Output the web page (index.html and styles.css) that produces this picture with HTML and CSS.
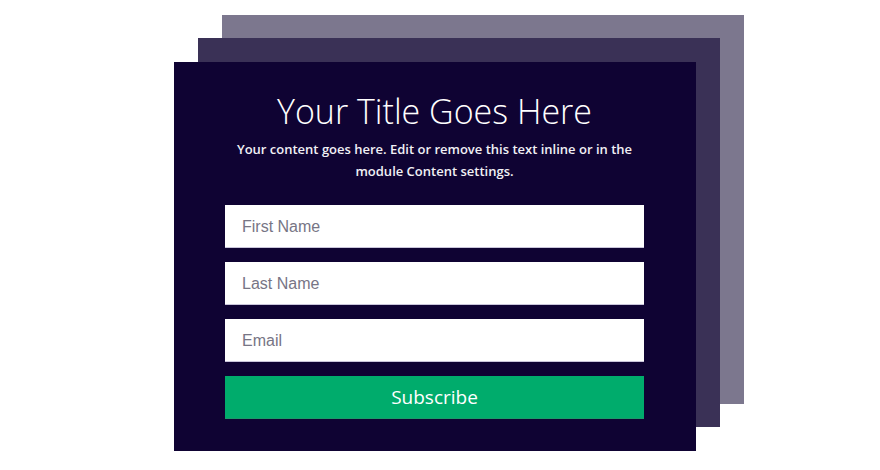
FILE: index.html
```html
<!DOCTYPE html>
<html>
<head>
<meta charset="utf-8">
<link rel="stylesheet" href="styles.css">
</head>
<body>
<div class="page">
  <div class="card">
    <h1 class="title">Your Title Goes Here</h1>
    <p class="text">Your content goes here. Edit or remove this text inline or in the module Content settings.</p>
    <form class="form">
      <input class="field" type="text" placeholder="First Name">
      <input class="field" type="text" placeholder="Last Name">
      <input class="field" type="text" placeholder="Email">
      <button class="btn" type="button">Subscribe</button>
    </form>
  </div>
</div>
</body>
</html>
```
FILE: styles.css
```css
html, body {
  margin: 0;
  padding: 0;
  background: #ffffff;
}
.page {
  width: 880px;
  height: 470px;
  padding: 62px 0 0 174px;
  box-sizing: border-box;
}
.card {
  width: 522px;
  height: 389px;
  box-sizing: border-box;
  background: #0f0333;
  padding: 28px 52px 32px 51px;
  box-shadow: 24px -24px 0 #3a3156, 48px -47px 0 #7c778e;
  display: flex;
  flex-direction: column;
  align-items: stretch;
}
.title {
  margin: 0;
  font-family: "Open Sans", sans-serif;
  font-weight: 300;
  font-size: 34px;
  line-height: 42px;
  color: #ffffff;
  text-align: center;
}
.text {
  margin: 6px 0 0;
  font-family: "Open Sans", sans-serif;
  font-weight: 600;
  font-size: 13px;
  line-height: 22px;
  color: #f1f0f5;
  text-align: center;
}
.form {
  margin-top: 23px;
  display: flex;
  flex-direction: column;
  gap: 14px;
}
.field {
  display: block;
  width: 100%;
  height: 43px;
  box-sizing: border-box;
  margin: 0;
  border: none;
  border-bottom: 1px solid #c9c5da;
  background: #ffffff;
  padding: 1px 17px 0;
  font-family: "Liberation Sans", Arial, sans-serif;
  font-size: 16px;
  color: #333;
  outline: none;
}
.field::placeholder {
  color: #777585;
  opacity: 1;
}
.btn {
  display: block;
  width: 100%;
  height: 43px;
  margin: 0;
  border: none;
  border-bottom: 1px solid #1b9a6a;
  background: #00ac6c;
  color: #ffffff;
  font-family: "Open Sans", sans-serif;
  font-size: 19px;
  font-weight: 400;
  cursor: pointer;
  padding: 0;
}
```
